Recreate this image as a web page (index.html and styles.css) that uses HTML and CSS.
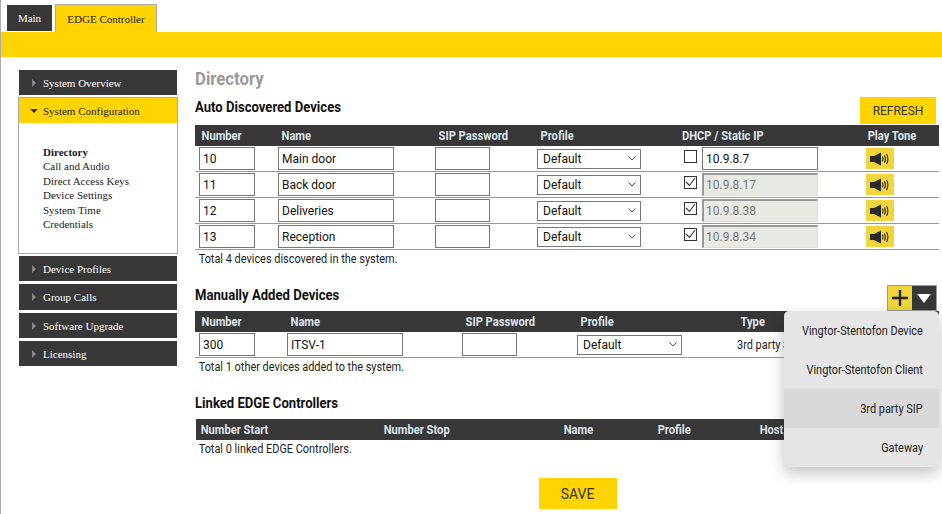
FILE: index.html
```html
<!DOCTYPE html>
<html lang="en">
<head>
<meta charset="utf-8">
<title>EDGE Controller</title>
<link rel="stylesheet" href="styles.css">
</head>
<body>
<nav class="tabs">
  <a class="tab">Main</a>
  <a class="tab tab-active">EDGE Controller</a>
</nav>
<div class="band"></div>
<div class="page">
  <aside class="side">
    <div class="nav-item"><span class="arrow"></span>System Overview</div>
    <div class="nav-group">
      <div class="nav-open"><span class="arrow-down"></span>System Configuration</div>
      <ul class="sub">
        <li class="sub-active">Directory</li>
        <li>Call and Audio</li>
        <li>Direct Access Keys</li>
        <li>Device Settings</li>
        <li>System Time</li>
        <li>Credentials</li>
      </ul>
    </div>
    <div class="nav-item"><span class="arrow"></span>Device Profiles</div>
    <div class="nav-item nav-tall"><span class="arrow"></span>Group Calls</div>
    <div class="nav-item"><span class="arrow"></span>Software Upgrade</div>
    <div class="nav-item"><span class="arrow"></span>Licensing</div>
  </aside>
  <main class="main">
    <h1 class="title">Directory</h1>
    <div class="sec-head sec-auto">
      <h2 class="sec-title">Auto Discovered Devices</h2>
      <button class="btn btn-refresh">REFRESH</button>
    </div>
    <div class="grid grid-auto head">
      <div>Number</div><div>Name</div><div>SIP Password</div><div>Profile</div><div>DHCP / Static IP</div><div>Play Tone</div>
    </div>
    <div class="grid grid-auto row">
      <div><input class="in in-num" value="10"></div><div><input class="in in-name" value="Main door"></div><div><input class="in in-pw"></div>
      <div><select class="sel"><option>Default</option></select></div>
      <div class="ip"><input type="checkbox" class="chk"><input class="in in-name" value="10.9.8.7"></div>
      <div><button class="play"><svg width="21" height="16" viewBox="0 0 21 16"><path d="M0 5h4l7-3.500v13L4 11H0z" fill="#2a2a2a"/><path d="M12.500 5.500q1.200 2.500 0 5M14.500 4.500q1.800 3.500 0 7M16.500 3q2.800 5 0 10" fill="none" stroke="#2a2a2a" stroke-width="1.100"/></svg></button></div>
    </div>
    <div class="grid grid-auto row">
      <div><input class="in in-num" value="11"></div><div><input class="in in-name" value="Back door"></div><div><input class="in in-pw"></div>
      <div><select class="sel"><option>Default</option></select></div>
      <div class="ip"><input type="checkbox" class="chk" checked><input class="in in-name" value="10.9.8.17" disabled></div>
      <div><button class="play"><svg width="21" height="16" viewBox="0 0 21 16"><path d="M0 5h4l7-3.500v13L4 11H0z" fill="#2a2a2a"/><path d="M12.500 5.500q1.200 2.500 0 5M14.500 4.500q1.800 3.500 0 7M16.500 3q2.800 5 0 10" fill="none" stroke="#2a2a2a" stroke-width="1.100"/></svg></button></div>
    </div>
    <div class="grid grid-auto row">
      <div><input class="in in-num" value="12"></div><div><input class="in in-name" value="Deliveries"></div><div><input class="in in-pw"></div>
      <div><select class="sel"><option>Default</option></select></div>
      <div class="ip"><input type="checkbox" class="chk" checked><input class="in in-name" value="10.9.8.38" disabled></div>
      <div><button class="play"><svg width="21" height="16" viewBox="0 0 21 16"><path d="M0 5h4l7-3.500v13L4 11H0z" fill="#2a2a2a"/><path d="M12.500 5.500q1.200 2.500 0 5M14.500 4.500q1.800 3.500 0 7M16.500 3q2.800 5 0 10" fill="none" stroke="#2a2a2a" stroke-width="1.100"/></svg></button></div>
    </div>
    <div class="grid grid-auto row">
      <div><input class="in in-num" value="13"></div><div><input class="in in-name" value="Reception"></div><div><input class="in in-pw"></div>
      <div><select class="sel"><option>Default</option></select></div>
      <div class="ip"><input type="checkbox" class="chk" checked><input class="in in-name" value="10.9.8.34" disabled></div>
      <div><button class="play"><svg width="21" height="16" viewBox="0 0 21 16"><path d="M0 5h4l7-3.500v13L4 11H0z" fill="#2a2a2a"/><path d="M12.500 5.500q1.200 2.500 0 5M14.500 4.500q1.800 3.500 0 7M16.500 3q2.800 5 0 10" fill="none" stroke="#2a2a2a" stroke-width="1.100"/></svg></button></div>
    </div>
    <p class="total">Total 4 devices discovered in the system.</p>

    <div class="sec-head sec-manual">
      <h2 class="sec-title">Manually Added Devices</h2>
      <div class="split">
        <button class="split-add"><svg width="16" height="16" viewBox="0 0 16 16"><path d="M8 0v16M0 8h16" stroke="#222" stroke-width="2.400"/></svg></button>
        <button class="split-more"><svg width="14" height="9" viewBox="0 0 14 9"><path d="M0 0h14L7 9z" fill="#fff"/></svg></button>
      </div>
    </div>
    <div class="wrap-manual">
      <div class="grid grid-manual head">
        <div>Number</div><div>Name</div><div>SIP Password</div><div>Profile</div><div>Type</div>
      </div>
      <div class="grid grid-manual row row-manual">
        <div><input class="in in-num" value="300"></div><div><input class="in in-name" value="ITSV-1"></div><div><input class="in in-pw"></div>
        <div><select class="sel sel-wide"><option>Default</option></select></div>
        <div class="type"><span class="narrow">3rd party SIP</span></div>
      </div>
      <p class="total">Total 1 other devices added to the system.</p>

      <h2 class="sec-title sec-linked">Linked EDGE Controllers</h2>
      <div class="grid grid-linked head">
        <div>Number Start</div><div class="tick">Number Stop</div><div class="tick">Name</div><div class="tick">Profile</div><div class="tick">Host</div>
      </div>
      <p class="total total-linked">Total 0 linked EDGE Controllers.</p>

      <ul class="menu">
        <li><span class="narrow-r">Vingtor-Stentofon Device</span></li>
        <li><span class="narrow-r">Vingtor-Stentofon Client</span></li>
        <li class="menu-hover"><span class="narrow-r">3rd party SIP</span></li>
        <li><span class="narrow-r">Gateway</span></li>
      </ul>
    </div>
    <div class="save-wrap"><button class="btn btn-save">SAVE</button></div>
  </main>
</div>
</body>
</html>
```
FILE: styles.css
```css
* { box-sizing: border-box; }
html, body { margin: 0; padding: 0; height: 514px; overflow: hidden; background: #fff; }
body { border-left: 1px solid #aaa; font-family: Roboto, sans-serif; font-size: 12px; color: #222; }

.tabs { display: flex; align-items: flex-end; height: 32px; padding-left: 6px; gap: 3px; font-family: "Liberation Serif", serif; font-size: 11px; }
.tab { display: flex; align-items: center; justify-content: center; width: 45px; height: 26px; margin-bottom: 1px; background: #383838; color: #fff; }
.tab-active { width: 102px; height: 28px; margin-bottom: 0; background: #ffd400; color: #222; border: 1px solid #aaa; border-bottom: 0; }
.band { height: 25px; background: #ffd400; }

.page { display: flex; }
.side { width: 158px; margin: 13px 0 0 18px; font-family: "Liberation Serif", serif; font-size: 11px; }
.nav-item { display: flex; align-items: center; height: 25px; margin-bottom: 3px; padding-left: 13px; background: #383838; color: #fff; }
.nav-tall { height: 26px; }
.arrow { width: 0; height: 0; margin-right: 7px; border-left: 4px solid #888; border-top: 4px solid transparent; border-bottom: 4px solid transparent; }
.arrow-down { width: 0; height: 0; margin-right: 5px; border-top: 4px solid #333; border-left: 4px solid transparent; border-right: 4px solid transparent; }
.nav-group { margin: -1px -1px 2px; border: 1px solid #aaa; height: 157px; }
.nav-open { display: flex; align-items: center; height: 25px; padding-left: 11px; background: #ffd400; color: #222; }
.sub { list-style: none; margin: 0; padding: 22px 0 0 24px; line-height: 14.400px; color: #222; }
.sub-active { font-weight: bold; }

.main { position: relative; width: 747px; margin-left: 18px; }
.title { margin: 11px 0 0; font-size: 18px; font-weight: 700; line-height: 22px; color: #999; transform: scaleX(0.93); transform-origin: left; }
.sec-title { margin: 0; font-size: 14px; font-weight: 700; line-height: 18px; color: #111; transform: scaleX(0.935); transform-origin: left; }
.sec-head { display: flex; justify-content: space-between; align-items: flex-start; }
.sec-auto { height: 35px; padding-right: 6px; }
.sec-auto .sec-title { margin-top: 8px; }
.sec-manual { height: 26px; margin-top: 17px; padding-right: 5px; }
.sec-manual .sec-title { margin-top: 1px; }

.btn { border: 0; background: #ffd400; color: #333; font-family: Roboto, sans-serif; padding: 0; }
.btn-refresh { width: 76px; height: 27px; font-size: 12px; margin-top: 7px; }
.btn-save { width: 78px; height: 31px; font-size: 14px; }
.save-wrap { display: flex; justify-content: center; margin-top: 20px; padding-left: 18px; }

.grid { display: grid; align-items: center; width: 744px; }
.grid-auto { grid-template-columns: 80px 157px 102px 147px 182px 76px; }
.grid-manual { grid-template-columns: 89px 175px 115px 160px 205px; }
.grid-linked { grid-template-columns: 183px 180px 94px 102px 185px; margin-left: 1px; width: 743px; }
.head { height: 21px; background: #383838; color: #dfe6ee; font-size: 12px; font-weight: 700; }
.head > div { padding-left: 7px; white-space: nowrap; transform: scaleX(0.93); transform-origin: left; }
.grid-auto.head > div:nth-child(5) { padding-left: 1px; }
.grid-auto.head > div:nth-child(6) { padding-left: 5px; }
.grid-linked.head > div { padding-left: 5px; }
.tick { position: relative; }
.tick::before { content: ""; position: absolute; left: 0; top: -7px; width: 1px; height: 1px; background: #fff; }

.row { height: 26px; border-bottom: 1px solid #999; }
.row > div { display: flex; align-items: center; padding-left: 3px; }
.row > div:first-child { padding-left: 4px; }

.in { height: 23px; padding: 1px 3px; border: 1px solid #777; border-radius: 0; font-family: Roboto, sans-serif; font-size: 12px; color: #111; background: #fff; outline: 0; }
.in-num { width: 56px; }
.in-name { width: 116px; }
.in-pw { width: 55px; }
.in:disabled { border: 1px solid #ddd; border-top: 2px solid #999; border-left: 2px solid #999; background: #e9e9e4; color: #777; padding-left: 2px; }
.sel { appearance: none; width: 104px; height: 20px; padding: 0 0 0 5px; border: 1px solid #777; border-radius: 0; background: #fff url("data:image/svg+xml,%3Csvg xmlns='http://www.w3.org/2000/svg' width='8' height='5'%3E%3Cpath d='M.5.5l3.500 3.500 3.500-3.500' fill='none' stroke='%23555'/%3E%3C/svg%3E") no-repeat right 4px center; font-family: Roboto, sans-serif; font-size: 12px; color: #111; }
.sel-wide { width: 105px; }
.ip { gap: 5px; }
.chk { appearance: none; flex: none; width: 13px; height: 13px; margin: 0 0 5px; border: 1px solid #333; background: #fff; }
.chk:checked { background: #fff url("data:image/svg+xml,%3Csvg xmlns='http://www.w3.org/2000/svg' width='11' height='11'%3E%3Cpath d='M1 5l3.500 3.500L10 1' fill='none' stroke='%23333' stroke-width='1.100'/%3E%3C/svg%3E") no-repeat center; }
.play { display: flex; align-items: center; justify-content: center; width: 28px; height: 21px; padding: 0; border: 0; background: #f0d53c; }

.total { margin: 0; padding-left: 4px; font-size: 12px; line-height: 18px; color: #222; transform: scaleX(0.91); transform-origin: left; }
.sec-linked { margin-top: 18px; height: 25px; }
.type { white-space: nowrap; overflow: hidden; font-size: 12px; }
.narrow { display: inline-block; transform: scaleX(0.91); transform-origin: left; }

.split { display: flex; height: 26px; border: 1px solid #999; }
.split-add { display: flex; align-items: center; justify-content: center; width: 24px; padding: 0; border: 0; background: #f0d53c; }
.split-more { display: flex; align-items: center; justify-content: center; width: 24px; padding: 0; border: 0; background: #383838; }

.wrap-manual { position: relative; }
.menu { position: absolute; left: 589px; top: 0; width: 155px; margin: 0; padding: 0; list-style: none; background: #e5e5e5; border-radius: 5px; box-shadow: 0 6px 16px rgba(0, 0, 0, 0.250); font-size: 12px; color: #222; text-align: right; }
.menu li { height: 39px; line-height: 40px; padding-right: 16px; }
.menu-hover { background: #d8d8d8; }
.narrow-r { display: inline-block; transform: scaleX(0.91); transform-origin: right; }
```
